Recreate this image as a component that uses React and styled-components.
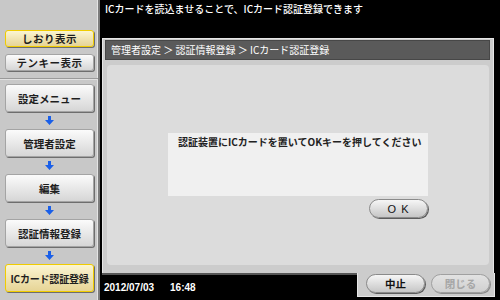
import React from 'react';
import styled, { createGlobalStyle } from 'styled-components';

const GlobalStyle = createGlobalStyle`
  html, body {
    margin: 0;
    padding: 0;
    background: #000;
  }
  body {
    font-family: "Noto Sans CJK JP", "Liberation Sans", sans-serif;
  }
`;

const steps = ['設定メニュー', '管理者設定', '編集', '認証情報登録', 'ICカード認証登録'];

function DownArrow() {
  return (
    <svg width="9" height="9" viewBox="0 0 9 9">
      <path d="M3 0 H6 V4 H9 L4.5 9 L0 4 H3 Z" fill="#1a5fe8" />
    </svg>
  );
}

function App() {
  return (
    <>
      <GlobalStyle />
      <Screen>
        <Sidebar>
          <TopGroup>
            <SideButton $active $small>しおり表示</SideButton>
            <SideButton $small>テンキー表示</SideButton>
          </TopGroup>
          <StepList>
            {steps.map((label, i) => (
              <React.Fragment key={label}>
                <SideButton $active={i === steps.length - 1} $long={label.length > 7}>
                  {label}
                </SideButton>
                {i < steps.length - 1 && (
                  <ArrowRow>
                    <DownArrow />
                  </ArrowRow>
                )}
              </React.Fragment>
            ))}
          </StepList>
        </Sidebar>

        <Main>
          <Message>ICカードを読込ませることで、ICカード認証登録できます</Message>
          <Panel>
            <Breadcrumb>管理者設定 ＞ 認証情報登録 ＞ ICカード認証登録</Breadcrumb>
            <PanelBody>
              <Inner>
                <DialogBox>認証装置にICカードを置いてOKキーを押してください</DialogBox>
                <OkRow>
                  <PillButton $wide>O K</PillButton>
                </OkRow>
              </Inner>
            </PanelBody>
          </Panel>
          <Footer>
            <DateBar>
              <span>2012/07/03</span>
              <span>16:48</span>
            </DateBar>
            <ButtonTab>
              <PillButton>中止</PillButton>
              <PillButton $disabled>閉じる</PillButton>
            </ButtonTab>
          </Footer>
        </Main>
      </Screen>
    </>
  );
}

const Screen = styled.div`
  display: flex;
  width: 500px;
  height: 300px;
  overflow: hidden;
  background: #000;
`;

const Sidebar = styled.div`
  width: 98px;
  flex-shrink: 0;
  background: #c8c8c8;
  border-right: 2px solid #7c7c7c;
  box-shadow: inset -1px 0 0 #e4e4e4;
  display: flex;
  flex-direction: column;
`;

const TopGroup = styled.div`
  height: 79px;
  box-sizing: border-box;
  padding: 30px 0 0 5px;
  display: flex;
  flex-direction: column;
  gap: 7px;
  border-bottom: 1px solid #9a9a9a;
  box-shadow: 0 1px 0 #e2e2e2;
`;

const StepList = styled.div`
  padding: 5px 0 0 5px;
  display: flex;
  flex-direction: column;
`;

const SideButton = styled.div`
  width: 89px;
  height: ${(p) => (p.$small ? '17px' : '28px')};
  box-sizing: border-box;
  display: flex;
  align-items: center;
  justify-content: center;
  font-size: ${(p) => (p.$long ? '10px' : '10.5px')};
  font-weight: 700;
  color: #1e1e1e;
  white-space: nowrap;
  letter-spacing: ${(p) => (p.$small ? '0.5px' : p.$long ? '-0.2px' : '0')};
  border-radius: 3px;
  border: 1px solid ${(p) => (p.$active ? '#f0cc00' : '#a4a4a4')};
  background: ${(p) =>
    p.$active
      ? 'linear-gradient(#fbf5d2, #e6d496)'
      : 'linear-gradient(#fbfbfb, #d6d6d6)'};
  box-shadow: 1px 1px 0 #6e6e6e;
`;

const ArrowRow = styled.div`
  width: 89px;
  height: 17px;
  display: flex;
  align-items: center;
  justify-content: center;
`;

const Main = styled.div`
  flex: 1;
  display: flex;
  flex-direction: column;
  background: #000;
`;

const Message = styled.div`
  height: 38px;
  box-sizing: border-box;
  padding: 1px 0 0 5px;
  color: #fff;
  font-size: 10px;
  font-weight: 500;
  white-space: nowrap;
`;

const Panel = styled.div`
  margin-left: 2px;
  width: 392px;
  height: 235px;
  box-sizing: border-box;
  background: #cccccc;
  border: 1px solid #e6e6e6;
  border-bottom: none;
  padding: 1px 3px 0 2px;
  display: flex;
  flex-direction: column;
`;

const Breadcrumb = styled.div`
  height: 20px;
  box-sizing: border-box;
  background: #5a5a5a;
  border: 1px solid #474747;
  color: #fff;
  font-size: 10px;
  line-height: 18px;
  padding-left: 5px;
  white-space: nowrap;
`;

const PanelBody = styled.div`
  flex: 1;
  padding: 5px 1px 8px 2px;
  display: flex;
`;

const Inner = styled.div`
  flex: 1;
  background: #dcdcdc;
  border-radius: 4px;
  padding-top: 68px;
  display: flex;
  flex-direction: column;
  align-items: center;
`;

const DialogBox = styled.div`
  width: 260px;
  height: 63px;
  box-sizing: border-box;
  background: #f0f0f0;
  padding: 1px 0 0 10px;
  font-size: 10px;
  font-weight: 700;
  color: #222;
  white-space: nowrap;
`;

const OkRow = styled.div`
  width: 260px;
  display: flex;
  justify-content: flex-end;
  padding-top: 3px;
`;

const PillButton = styled.div`
  width: 59px;
  height: 19px;
  box-sizing: border-box;
  display: flex;
  align-items: center;
  justify-content: center;
  border-radius: 10px;
  font-family: ${(p) => (p.$wide ? '"Liberation Sans", sans-serif' : 'inherit')};
  font-size: ${(p) => (p.$wide ? '11px' : '10.5px')};
  font-weight: ${(p) => (p.$wide ? 400 : 700)};
  letter-spacing: ${(p) => (p.$wide ? '1px' : '0')};
  color: ${(p) => (p.$disabled ? '#a6a6a6' : '#111')};
  border: 1px solid ${(p) => (p.$disabled ? '#a0a0a0' : '#8a8a8a')};
  background: ${(p) =>
    p.$disabled ? 'linear-gradient(#e2e2e2, #d0d0d0)' : 'linear-gradient(#f6f6f6, #c6c6c6)'};
  box-shadow: ${(p) => (p.$disabled ? '1px 1px 0 #8c8c8c' : '1px 1px 0 #5c5c5c')};
  white-space: nowrap;
`;

const Footer = styled.div`
  flex: 1;
  display: flex;
`;

const DateBar = styled.div`
  flex: 1;
  margin-left: 2px;
  border-top: 2px solid #555;
  padding: 7px 0 0 2px;
  display: flex;
  gap: 16px;
  color: #fff;
  font-family: "Liberation Sans", sans-serif;
  font-size: 10px;
  font-weight: 700;
`;

const ButtonTab = styled.div`
  width: 138px;
  margin-right: 5px;
  height: 24px;
  box-sizing: border-box;
  background: #cccccc;
  border: 1px solid #e6e6e6;
  border-top: none;
  padding: 1px 0 0 8px;
  display: flex;
  gap: 6px;
`;

export default App;
